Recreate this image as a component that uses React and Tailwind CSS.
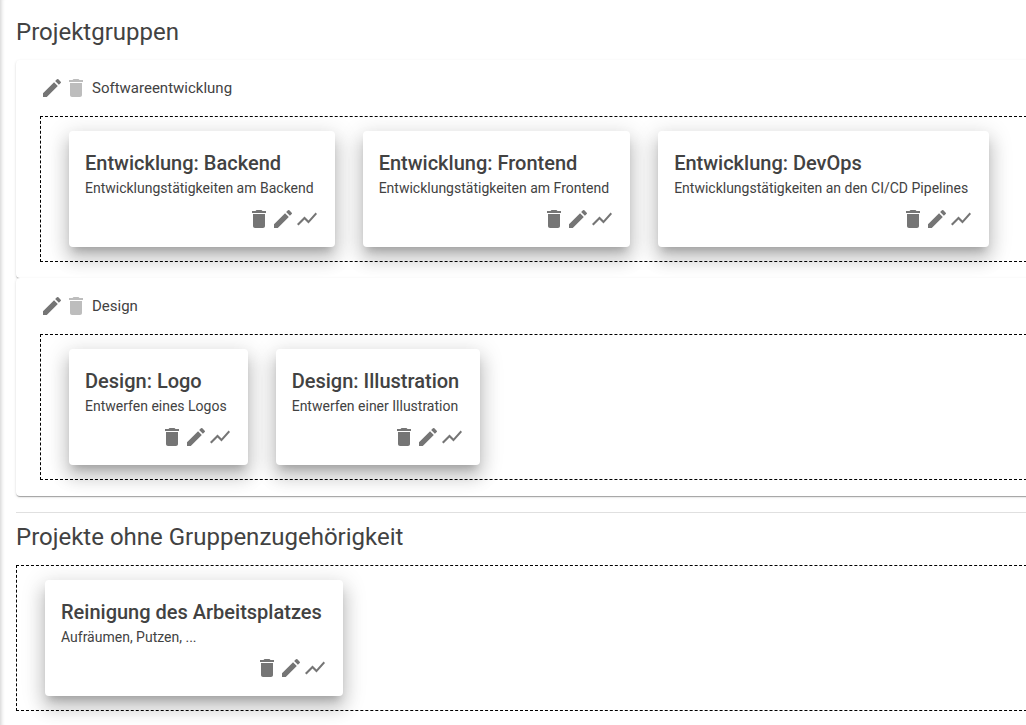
import React from "react";
import { MdDelete, MdEdit, MdShowChart } from "react-icons/md";

const groups = [
  {
    name: "Softwareentwicklung",
    projects: [
      { title: "Entwicklung: Backend", text: "Entwicklungstätigkeiten am Backend" },
      { title: "Entwicklung: Frontend", text: "Entwicklungstätigkeiten am Frontend" },
      { title: "Entwicklung: DevOps", text: "Entwicklungstätigkeiten an den CI/CD Pipelines" },
    ],
  },
  {
    name: "Design",
    projects: [
      { title: "Design: Logo", text: "Entwerfen eines Logos" },
      { title: "Design: Illustration", text: "Entwerfen einer Illustration" },
    ],
  },
];

const ungrouped = [{ title: "Reinigung des Arbeitsplatzes", text: "Aufräumen, Putzen, ..." }];

function IconButton({ icon: Icon, label, disabled }) {
  return (
    <button
      type="button"
      aria-label={label}
      disabled={disabled}
      className="block size-6 text-[#757575] disabled:text-[#bdbdbd]"
    >
      <Icon className="size-6" />
    </button>
  );
}

function ProjectCard({ title, text }) {
  return (
    <article className="rounded bg-white p-4 shadow-[0_7px_8px_-4px_rgba(0,0,0,0.2),0_12px_17px_2px_rgba(0,0,0,0.14),0_5px_22px_4px_rgba(0,0,0,0.12)]">
      <div className="pr-[5px] pb-2.5">
        <h3 className="text-xl leading-8 font-medium">{title}</h3>
        <p className="text-sm leading-[18px]">{text}</p>
      </div>
      <div className="flex justify-end">
        <IconButton icon={MdDelete} label={`${title} löschen`} />
        <IconButton icon={MdEdit} label={`${title} bearbeiten`} />
        <IconButton icon={MdShowChart} label={`${title} auswerten`} />
      </div>
    </article>
  );
}

function DropZone({ projects }) {
  return (
    <div className="-mr-4 flex gap-7 border border-dashed border-black py-3.5 pl-7">
      {projects.map((p) => (
        <ProjectCard key={p.title} {...p} />
      ))}
    </div>
  );
}

function GroupPanel({ name, projects }) {
  return (
    <section className="relative -mr-4 rounded bg-white pr-4 pb-4 pl-6 shadow-[0_2px_1px_-1px_rgba(0,0,0,0.2),0_1px_1px_0_rgba(0,0,0,0.14),0_1px_3px_0_rgba(0,0,0,0.12)]">
      <header className="flex h-14 items-center">
        <IconButton icon={MdEdit} label={`${name} bearbeiten`} />
        <IconButton icon={MdDelete} label={`${name} löschen`} disabled />
        <h2 className="ml-1 text-[15px] leading-6">{name}</h2>
      </header>
      <DropZone projects={projects} />
    </section>
  );
}

export default function App() {
  return (
    <main className="min-h-screen overflow-x-hidden bg-white pt-4 pb-3.5 pl-4 font-['Roboto',sans-serif] whitespace-nowrap text-[#424242] shadow-[inset_5px_0_4px_-4px_rgba(0,0,0,0.2)]">
      <h1 className="mb-3 text-2xl leading-8">Projektgruppen</h1>
      {groups.map((g) => (
        <GroupPanel key={g.name} {...g} />
      ))}
      <hr className="mt-4 mb-2 border-t border-[#e0e0e0]" />
      <h1 className="mb-3 text-2xl leading-8">Projekte ohne Gruppenzugehörigkeit</h1>
      <DropZone projects={ungrouped} />
    </main>
  );
}
